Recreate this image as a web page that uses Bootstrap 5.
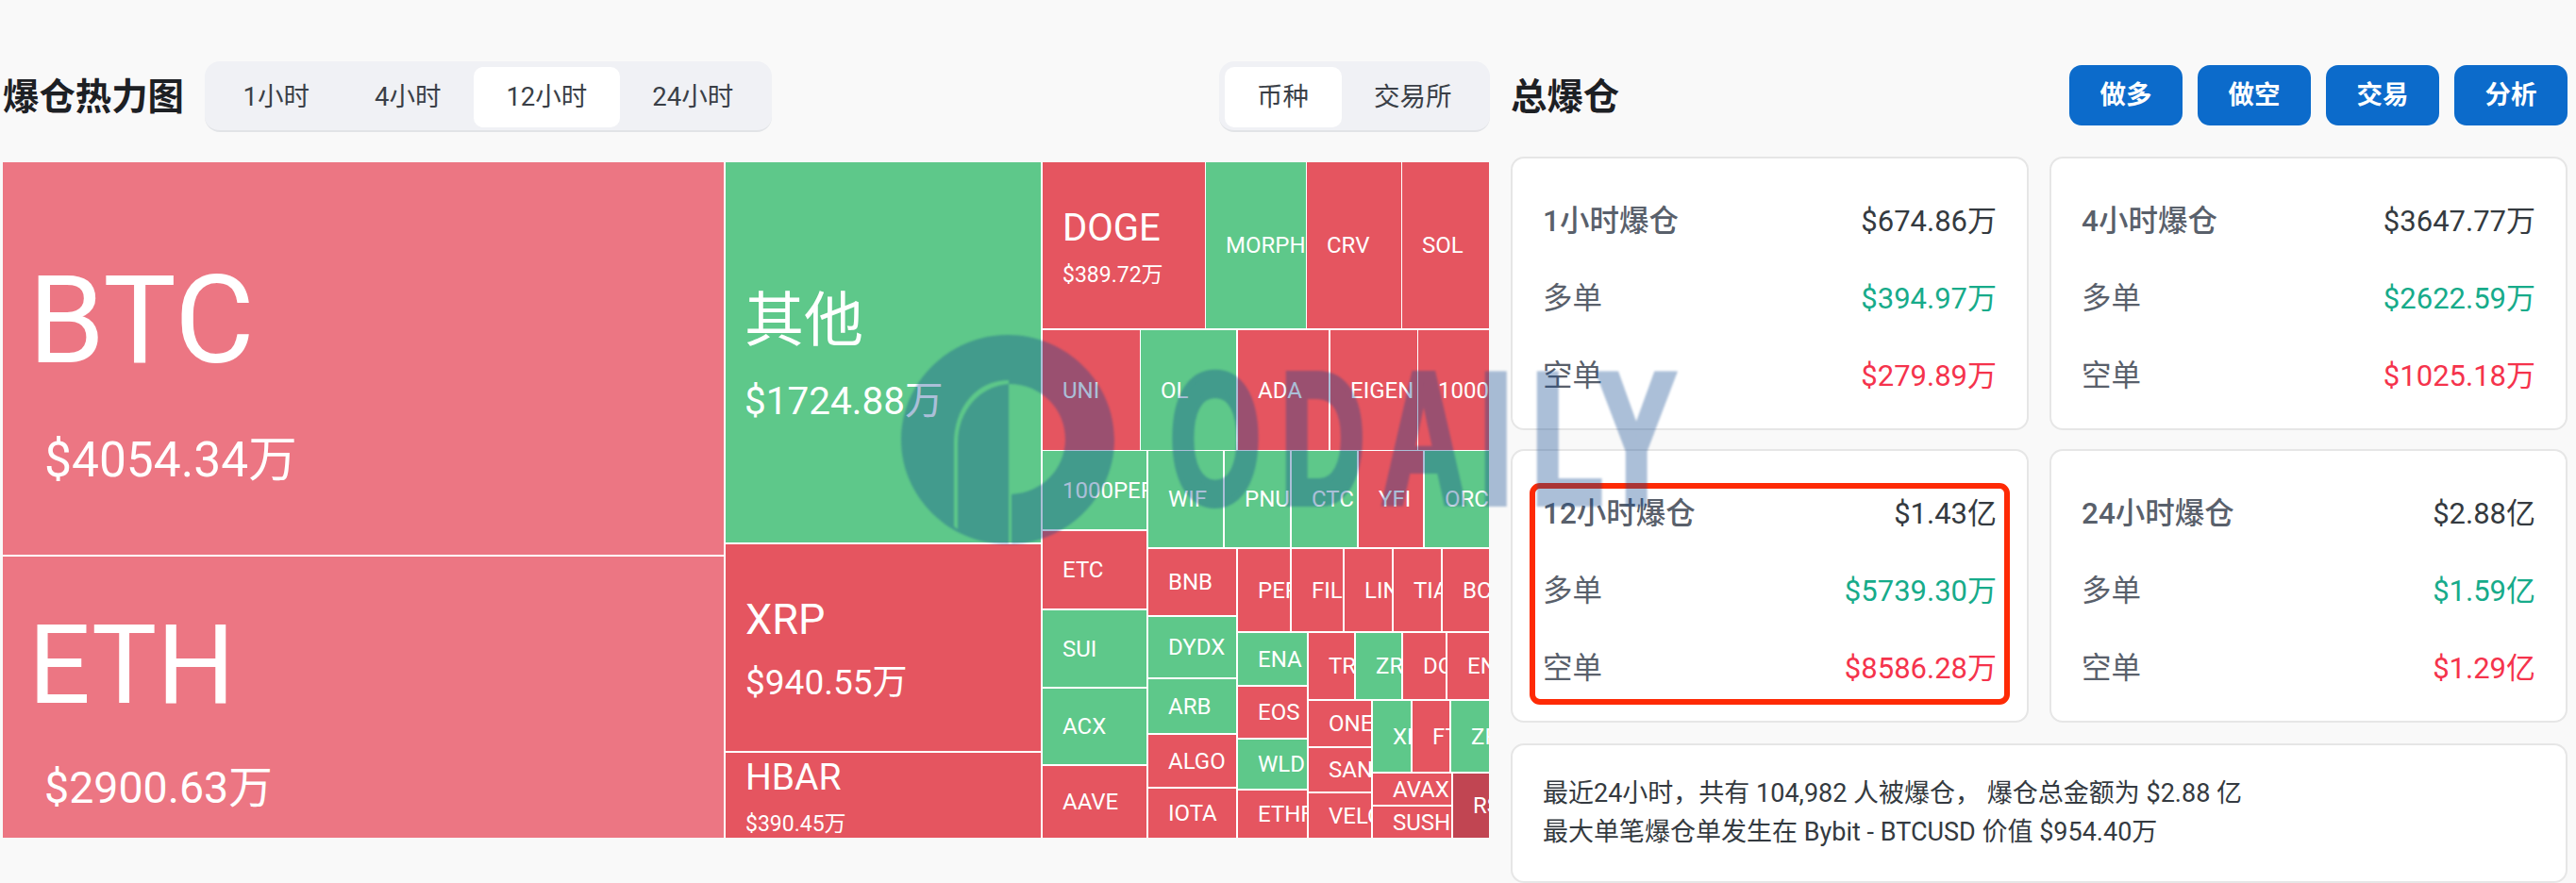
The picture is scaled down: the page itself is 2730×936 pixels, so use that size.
<!DOCTYPE html>
<html lang="zh-CN">
<head>
    <meta charset="UTF-8">
    <meta name="viewport" content="width=device-width, initial-scale=1.0">
    <title>爆仓热力图</title>
    <link rel="stylesheet" href="https://cdn.jsdelivr.net/npm/bootstrap@5.3.0/dist/css/bootstrap.min.css">
    <style>
        html, body {
            height: 936px;
            overflow: hidden;
        }

        body {
            background-color: #f9f9f9;
            color: #343a40;
            font-family: Roboto, "Noto Sans CJK SC", sans-serif;
        }

        /* Page columns */
        .page-wrap {
            padding: 65px 9px 0 3px;
            gap: 23px;
        }

        .heat-col {
            width: 1575px;
        }

        .total-col {
            width: 1120px;
        }

        .head-row {
            height: 75px;
        }

        .heat-col .head-row {
            margin-bottom: 32px;
        }

        .total-col .head-row {
            margin-bottom: 26px;
        }

        .page-title {
            font-size: 38.4px;
            font-weight: 700;
            color: #1d2024;
            margin: 0;
            padding-top: 2px;
            line-height: 1;
        }

        /* Segmented switch */
        .seg-tabs {
            background-color: #f0f1f5;
            border-bottom: 2px solid #e2e4e7;
            border-radius: 16px;
            padding: 6px;
            height: 75px;
            flex-wrap: nowrap;
        }

        .seg-first {
            margin-left: 22px;
        }

        .seg-last {
            margin-left: auto;
            margin-right: -1px;
        }

        .seg-tabs .nav-link {
            color: #3a3f47;
            font-size: 27.5px;
            line-height: 64px;
            height: 64px;
            padding: 0 34.5px;
            border-radius: 10px;
        }

        .seg-tabs .nav-link.active {
            background-color: #fff;
        }

        /* Treemap */
        .tree-box {
            position: relative;
            height: 716px;
            background-color: #fff;
            overflow: hidden;
        }

        .tile {
            position: absolute;
            overflow: hidden;
            color: #fff;
            white-space: nowrap;
            font-size: 24px;
            line-height: 1;
            padding-left: 21px;
        }

        .tile-red { background-color: #e55560; }
        .tile-green { background-color: #5ec88a; }
        .tile-pink { background-color: #ec7683; }
        .tile-dark { background-color: #c14552; }

        /* Action buttons */
        .act-group {
            margin-bottom: 4px;
        }

        .act-btn {
            width: 120px;
            height: 64px;
            font-size: 27.5px;
            font-weight: 700;
            line-height: 1;
            border: 0;
            border-radius: 13px;
            background-color: #0c6bcb;
            padding: 0;
        }

        /* Stat cards */
        .stat-grid {
            display: grid;
            grid-template-columns: 549px 549px;
            gap: 20px 22px;
        }

        .stat-box {
            position: relative;
            height: 290px;
            border: 2px solid #e6e6e6;
            border-radius: 14px;
            background-color: #fff;
            padding: 26px 32px 16px;
            font-size: 31px;
        }

        .stat-line {
            height: 82px;
            color: #59606b;
        }

        .stat-name {
            font-size: 31.5px;
        }

        .head-line .stat-name {
            font-weight: 500;
        }

        .stat-val { color: #343a40; }
        .stat-long { color: #17ab8a; }
        .stat-short { color: #f5334c; }

        .red-frame {
            position: absolute;
            left: 18px;
            right: 18px;
            top: 34px;
            bottom: 17px;
            border: 6px solid #fe2a05;
            border-radius: 11px;
        }

        .note-box {
            height: 148px;
            margin-top: 22px;
            border: 2px solid #e6e6e6;
            border-radius: 14px;
            background-color: #fff;
            padding: 0 32px;
            font-size: 27px;
            line-height: 41px;
            color: #343a40;
        }

        /* Watermark over the page */
        .water-mark {
            position: absolute;
            left: 0;
            top: 0;
            width: 2730px;
            height: 936px;
            pointer-events: none;
            filter: blur(0.8px);
        }

        .water-mark g {
            opacity: 0.35;
            fill: #0f4891;
        }

        .water-mark text {
            font-family: "Liberation Sans", sans-serif;
            font-weight: 700;
            font-size: 197px;
            stroke: #0f4891;
            stroke-width: 8px;
            stroke-linejoin: miter;
        }
    </style>
</head>
<body>

    <div class="page-wrap d-flex">

        <!-- Heat map -->
        <div class="heat-col">
            <div class="head-row d-flex align-items-center">
                <h2 class="page-title">爆仓热力图</h2>
                <ul class="nav seg-tabs seg-first">
                    <li class="nav-item"><a class="nav-link" href="#">1小时</a></li>
                    <li class="nav-item"><a class="nav-link" href="#">4小时</a></li>
                    <li class="nav-item"><a class="nav-link active" href="#">12小时</a></li>
                    <li class="nav-item"><a class="nav-link" href="#">24小时</a></li>
                </ul>
                <ul class="nav seg-tabs seg-last">
                    <li class="nav-item"><a class="nav-link active" href="#">币种</a></li>
                    <li class="nav-item"><a class="nav-link" href="#">交易所</a></li>
                </ul>
            </div>
            <div class="tree-box" id="treeBox"></div>
        </div>

        <!-- Totals -->
        <div class="total-col">
            <div class="head-row d-flex align-items-center justify-content-between">
                <h2 class="page-title">总爆仓</h2>
                <div class="act-group d-flex gap-3">
                    <button class="btn btn-primary act-btn" type="button">做多</button>
                    <button class="btn btn-primary act-btn" type="button">做空</button>
                    <button class="btn btn-primary act-btn" type="button">交易</button>
                    <button class="btn btn-primary act-btn" type="button">分析</button>
                </div>
            </div>

            <div class="stat-grid">
                <div class="stat-box">
                    <div class="stat-line head-line d-flex justify-content-between align-items-center"><span class="stat-name">1小时爆仓</span><span class="stat-val">$674.86万</span></div>
                    <div class="stat-line d-flex justify-content-between align-items-center"><span class="stat-name">多单</span><span class="stat-long">$394.97万</span></div>
                    <div class="stat-line d-flex justify-content-between align-items-center"><span class="stat-name">空单</span><span class="stat-short">$279.89万</span></div>
                </div>
                <div class="stat-box">
                    <div class="stat-line head-line d-flex justify-content-between align-items-center"><span class="stat-name">4小时爆仓</span><span class="stat-val">$3647.77万</span></div>
                    <div class="stat-line d-flex justify-content-between align-items-center"><span class="stat-name">多单</span><span class="stat-long">$2622.59万</span></div>
                    <div class="stat-line d-flex justify-content-between align-items-center"><span class="stat-name">空单</span><span class="stat-short">$1025.18万</span></div>
                </div>
                <div class="stat-box">
                    <div class="stat-line head-line d-flex justify-content-between align-items-center"><span class="stat-name">12小时爆仓</span><span class="stat-val">$1.43亿</span></div>
                    <div class="stat-line d-flex justify-content-between align-items-center"><span class="stat-name">多单</span><span class="stat-long">$5739.30万</span></div>
                    <div class="stat-line d-flex justify-content-between align-items-center"><span class="stat-name">空单</span><span class="stat-short">$8586.28万</span></div>
                    <div class="red-frame"></div>
                </div>
                <div class="stat-box">
                    <div class="stat-line head-line d-flex justify-content-between align-items-center"><span class="stat-name">24小时爆仓</span><span class="stat-val">$2.88亿</span></div>
                    <div class="stat-line d-flex justify-content-between align-items-center"><span class="stat-name">多单</span><span class="stat-long">$1.59亿</span></div>
                    <div class="stat-line d-flex justify-content-between align-items-center"><span class="stat-name">空单</span><span class="stat-short">$1.29亿</span></div>
                </div>
            </div>

            <div class="note-box d-flex flex-column justify-content-center">
                <div>最近24小时，共有 104,982 人被爆仓， 爆仓总金额为 $2.88 亿</div>
                <div>最大单笔爆仓单发生在 Bybit - BTCUSD 价值 $954.40万</div>
            </div>
        </div>
    </div>

    <!-- Watermark -->
    <svg class="water-mark" viewBox="0 0 2730 936" aria-hidden="true">
        <g>
            <path fill-rule="evenodd" d="M1068 355 C1130 355 1181 405 1181 466 C1181 527 1130 577 1068 577 C1006 577 955 527 955 466 C955 405 1006 355 1068 355 Z
                M1069 407 C1105 407 1129 435 1129 465 C1129 497 1105 522 1072 524 L1072 576 L1069 576 Z
                M1069 403 C1035 403 1011 432 1011 470 L1011 558 L1015 561 L1015 470 C1015 436 1038 409 1069 407 Z"/>
            <text transform="scale(0.63 1)" x="1968 2154 2324 2489 2576 2687" y="533">ODAILY</text>
        </g>
    </svg>

    <script>
        // name, x1, y1, x2, y2 (page pixels), colour, and for two line tiles:
        // amount, name size, amount size, gap, top padding, left padding, amount indent
        const tiles = [
            ['BTC', 3, 172, 767, 588, 'pink', '$4054.34万', 130, 51.5, 57, 29, 27, 17],
            ['ETH', 3, 590, 767, 888, 'pink', '$2900.63万', 116, 46.5, 49, 27, 27, 17],
            ['其他', 769, 172, 1103, 575, 'green', '$1724.88万', 63, 40.5, 34, 7, 20, 0],
            ['XRP', 769, 577, 1103, 796, 'red', '$940.55万', 45, 37, 26, 2, 21, 0],
            ['HBAR', 769, 798, 1103, 888, 'red', '$390.45万', 39, 23, 18, 3, 21, 0],
            ['DOGE', 1105, 172, 1277, 348, 'red', '$389.72万', 40, 23, 18, 4, 21, 0],
            ['MORPHO', 1278, 172, 1384, 348, 'green'],
            ['CRV', 1385, 172, 1485, 348, 'red'],
            ['SOL', 1486, 172, 1578, 348, 'red'],
            ['UNI', 1105, 350, 1208, 477, 'red'],
            ['OL', 1209, 350, 1310, 477, 'green'],
            ['ADA', 1312, 350, 1408, 477, 'red'],
            ['EIGEN', 1410, 350, 1502, 477, 'red'],
            ['1000SHIB', 1503, 350, 1578, 477, 'red'],
            ['1000PEPE', 1105, 478, 1215, 561, 'green'],
            ['ETC', 1105, 563, 1215, 645, 'red'],
            ['SUI', 1105, 647, 1215, 728, 'green'],
            ['ACX', 1105, 730, 1215, 810, 'green'],
            ['AAVE', 1105, 812, 1215, 888, 'red'],
            ['WIF', 1217, 478, 1296, 580, 'green'],
            ['PNUT', 1298, 478, 1367, 580, 'green'],
            ['CTC', 1369, 478, 1438, 580, 'green'],
            ['YFI', 1440, 478, 1508, 580, 'red'],
            ['ORCA', 1510, 478, 1578, 580, 'green'],
            ['BNB', 1217, 582, 1310, 652, 'red'],
            ['DYDX', 1217, 654, 1310, 718, 'green'],
            ['ARB', 1217, 720, 1310, 777, 'green'],
            ['ALGO', 1217, 779, 1310, 834, 'red'],
            ['IOTA', 1217, 836, 1310, 888, 'red'],
            ['PEPE', 1312, 582, 1367, 669, 'red'],
            ['FIL', 1369, 582, 1423, 669, 'red'],
            ['LINK', 1425, 582, 1475, 669, 'red'],
            ['TIA', 1477, 582, 1527, 669, 'red'],
            ['BCH', 1529, 582, 1578, 669, 'red'],
            ['ENA', 1312, 671, 1385, 726, 'green'],
            ['EOS', 1312, 728, 1385, 782, 'red'],
            ['WLD', 1312, 784, 1385, 836, 'green'],
            ['ETHFI', 1312, 838, 1385, 888, 'red'],
            ['TRX', 1387, 671, 1435, 741, 'red'],
            ['ZRO', 1437, 671, 1485, 741, 'green'],
            ['DOT', 1487, 671, 1532, 741, 'red'],
            ['ENS', 1534, 671, 1578, 741, 'red'],
            ['ONE', 1387, 743, 1453, 791, 'red'],
            ['SAND', 1387, 793, 1453, 839, 'red'],
            ['VELO', 1387, 841, 1453, 888, 'red'],
            ['XLM', 1455, 743, 1495, 818, 'green'],
            ['FTM', 1497, 743, 1536, 818, 'red'],
            ['ZRX', 1538, 743, 1578, 818, 'green'],
            ['AVAX', 1455, 820, 1538, 853, 'red'],
            ['SUSHI', 1455, 855, 1538, 888, 'red'],
            ['RSR', 1540, 820, 1578, 888, 'dark']
        ];

        const treeBox = document.getElementById('treeBox');

        tiles.forEach(([name, x1, y1, x2, y2, colour, amount, nameSize, amountSize, gap, topPad, leftPad, indent]) => {
            const div = document.createElement('div');
            div.className = `tile tile-${colour} d-flex flex-column justify-content-center`;
            div.style.left = `${x1 - 3}px`;
            div.style.top = `${y1 - 172}px`;
            div.style.width = `${x2 - x1}px`;
            div.style.height = `${y2 - y1}px`;

            const label = document.createElement('div');
            label.textContent = name;
            div.appendChild(label);

            if (amount) {
                div.style.paddingTop = `${topPad}px`;
                div.style.paddingLeft = `${leftPad}px`;
                label.style.fontSize = `${nameSize}px`;

                const sub = document.createElement('div');
                sub.textContent = amount;
                sub.style.fontSize = `${amountSize}px`;
                sub.style.marginTop = `${gap}px`;
                sub.style.marginLeft = `${indent}px`;
                div.appendChild(sub);
            }

            treeBox.appendChild(div);
        });
    </script>

    <script src="https://cdn.jsdelivr.net/npm/bootstrap@5.3.0/dist/js/bootstrap.bundle.min.js"></script>
</body>
</html>
